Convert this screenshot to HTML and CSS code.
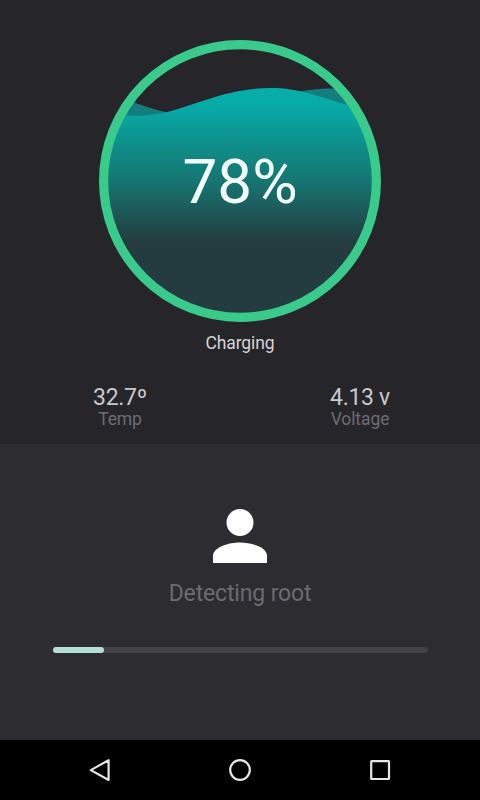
FILE: index.html
```html
<!DOCTYPE html>
<html lang="en">
  <head>
    <meta charset="UTF-8" />
    <meta name="viewport" content="width=device-width, initial-scale=1.0" />
    <title>Battery</title>
    <link rel="stylesheet" href="styles.css">
  </head>
  <body>
    <div class="battery">
      <div class="gauge">
        <svg class="wave" viewBox="0 0 282 282">
          <defs>
            <linearGradient id="water" gradientUnits="userSpaceOnUse" x1="0" y1="47" x2="0" y2="202">
              <stop offset="0" stop-color="#06afab" />
              <stop offset="0.15" stop-color="#08a8a4" />
              <stop offset="0.6" stop-color="#167672" />
              <stop offset="1" stop-color="#243c40" />
            </linearGradient>
            <clipPath id="round">
              <circle cx="141" cy="141" r="134" />
            </clipPath>
          </defs>
          <g clip-path="url(#round)">
            <!-- back wave -->
            <path fill="#147d7d" d="M0 50 C20 56 50 70 76 74 L190 54 C205 50 220 48.500 232 48.500 L282 51 V120 H0 Z" />
            <!-- front wave -->
            <path fill="url(#water)" d="M0 71 C20 76 40 78 66 72.500 C97 65 128 48 172 48 C200 48 218 56 248 65 L282 74 V282 H0 Z" />
          </g>
          <circle cx="141" cy="141" r="136.400" fill="none" stroke="#3acb8c" stroke-width="9.200" />
        </svg>
        <div class="percent">78%</div>
      </div>
      <div class="status">Charging</div>
      <div class="stats">
        <div class="stat">
          <div class="value">32.7º</div>
          <div class="label">Temp</div>
        </div>
        <div class="stat">
          <div class="value">4.13 v</div>
          <div class="label">Voltage</div>
        </div>
      </div>
    </div>

    <div class="root">
      <svg class="user" viewBox="0 0 54 54">
        <circle cx="27" cy="13.500" r="13.500" />
        <path d="M0 54 V47 C0 38 16 33.500 27 33.500 S54 38 54 47 V54 Z" />
      </svg>
      <div class="message">Detecting root</div>
      <div class="progress">
        <div class="bar"></div>
      </div>
    </div>

    <div class="nav">
      <svg class="key" viewBox="0 0 24 24"><path d="M20.600 2.200 V22 L2.800 12.100 Z" /></svg>
      <svg class="key" viewBox="0 0 24 24"><circle cx="12" cy="12" r="9.800" /></svg>
      <svg class="key" viewBox="0 0 24 24"><rect x="3.200" y="3.200" width="17.800" height="17.800" rx="0.500" /></svg>
    </div>
  </body>
</html>
```

FILE: styles.css
```css
body {
  display: flex;
  flex-direction: column;
  height: 100vh;
  margin: 0;
  background-color: #2d2c31;
  font-family: Roboto, sans-serif;
}

.battery {
  box-sizing: border-box;
  height: 444px;
  padding-top: 40px;
  background-color: #262529;
}

.gauge {
  position: relative;
  width: 282px;
  height: 282px;
  margin: 0 auto;
}

.wave {
  display: block;
  width: 100%;
  height: 100%;
}

/* the text lies over the water */
.percent {
  position: absolute;
  top: 105px;
  left: 0;
  width: 100%;
  color: #f4ffff;
  font-size: 62px;
  line-height: 74px;
  text-align: center;
}

.status {
  margin-top: 10px;
  color: #d4d4d5;
  font-size: 17.5px;
  letter-spacing: -0.1px;
  line-height: 22px;
  text-align: center;
}

.stats {
  display: flex;
  margin-top: 32px;
  text-align: center;
}

.stat {
  flex: 1;
}

.value {
  color: #c9c9ca;
  font-size: 23px;
  letter-spacing: -0.3px;
  line-height: 24px;
}

.label {
  color: #6d6c70;
  font-size: 17.5px;
  letter-spacing: -0.1px;
  line-height: 19px;
}

.root {
  display: flex;
  flex: 1;
  flex-direction: column;
  align-items: center;
}

.user {
  width: 54px;
  height: 54px;
  margin-top: 65px;
  fill: #fff;
}

.message {
  margin-top: 17px;
  color: #6c6b6f;
  font-size: 23px;
  letter-spacing: -0.15px;
  line-height: 28px;
}

.progress {
  width: 375px;
  height: 6px;
  margin-top: 39px;
  border-radius: 3px;
  background-color: #434247;
}

.bar {
  width: 51px;
  height: 6px;
  border-radius: 3px;
  background-color: #b5ded6;
}

.nav {
  display: flex;
  justify-content: space-between;
  align-items: center;
  height: 60px;
  padding: 0 88px;
  background-color: #000;
}

.key {
  width: 24px;
  height: 24px;
  fill: none;
  stroke: #e6e6e6;
  stroke-width: 2.2;
  stroke-linejoin: round;
}
```
